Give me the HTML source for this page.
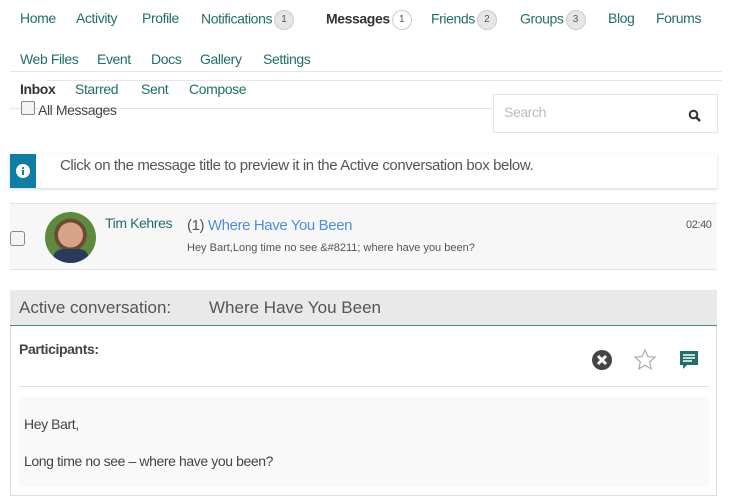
<!DOCTYPE html>
<html><head><style>
*{box-sizing:border-box;margin:0;padding:0}
body{width:734px;height:496px;overflow:hidden;background:#fff;font-family:"Liberation Sans",sans-serif;color:#555;position:relative;letter-spacing:-0.4px}
.a{position:absolute;white-space:nowrap}
.nav{font-size:14px;color:#1f6f6a}
.badge{display:inline-block;width:20px;height:20px;border-radius:50%;background:#e6e6e6;border:1px solid #ccc;font-size:10px;color:#555;text-align:center;line-height:18px;vertical-align:middle;margin-left:2px;letter-spacing:0}
.badge.w{background:#fff}
</style></head><body>
<div class="a nav" style="left:20px;top:10px">Home</div>
<div class="a nav" style="left:76px;top:10px">Activity</div>
<div class="a nav" style="left:142px;top:10px">Profile</div>
<div class="a nav" style="left:201px;top:10px">Notifications<span class="badge">1</span></div>
<div class="a nav" style="left:326px;top:10px;color:#333;font-weight:bold">Messages<span class="badge w" style="font-weight:normal">1</span></div>
<div class="a nav" style="left:431px;top:10px">Friends<span class="badge">2</span></div>
<div class="a nav" style="left:520px;top:10px">Groups<span class="badge">3</span></div>
<div class="a nav" style="left:608px;top:10px">Blog</div>
<div class="a nav" style="left:656px;top:10px">Forums</div>
<div class="a nav" style="left:20px;top:51px">Web Files</div>
<div class="a nav" style="left:97px;top:51px">Event</div>
<div class="a nav" style="left:151px;top:51px">Docs</div>
<div class="a nav" style="left:200px;top:51px">Gallery</div>
<div class="a nav" style="left:263px;top:51px">Settings</div>
<div class="a" style="left:10px;top:71px;width:712px;height:1px;background:#e6e6e6"></div>
<div class="a" style="left:46px;top:80px;width:676px;height:1px;background:#e6e6e6"></div>
<div class="a nav" style="left:20px;top:81px;color:#333;font-weight:bold">Inbox</div>
<div class="a nav" style="left:75px;top:81px">Starred</div>
<div class="a nav" style="left:141px;top:81px">Sent</div>
<div class="a nav" style="left:189px;top:81px">Compose</div>
<div class="a" style="left:10px;top:108px;width:484px;height:1px;background:#e6e6e6"></div>
<div class="a" style="left:21px;top:101px;width:14px;height:14px;border:1px solid #888;border-radius:2px;background:#f4f4f4"></div>
<div class="a" style="left:38px;top:102px;font-size:14px;color:#444">All Messages</div>
<div class="a" style="left:493px;top:94px;width:225px;height:39px;border:1px solid #e4e4e4"></div>
<div class="a" style="left:504px;top:104px;font-size:14px;color:#bbb">Search</div>
<svg class="a" style="left:688px;top:109px" width="14" height="14" viewBox="0 0 14 14"><circle cx="5.5" cy="5.5" r="3.8" fill="none" stroke="#333" stroke-width="2"/><path d="M8.5 8.5L12 12" stroke="#333" stroke-width="2.5"/></svg>
<div class="a" style="left:10px;top:154px;width:707px;height:34px;box-shadow:0 1px 3px rgba(0,0,0,.18);background:#fff"></div>
<div class="a" style="left:10px;top:154px;width:26px;height:34px;background:#0e7ea4"></div>
<svg class="a" style="left:16px;top:164px" width="14" height="14"><circle cx="7" cy="7" r="7" fill="#fff"/><rect x="6" y="6" width="2" height="5" fill="#0e7ea4"/><circle cx="7" cy="4" r="1.1" fill="#0e7ea4"/></svg>
<div class="a" style="left:60px;top:157px;font-size:15px;color:#555">Click on the message title to preview it in the Active conversation box below.</div>
<div class="a" style="left:10px;top:203px;width:707px;height:67px;background:#f7f7f7;border-top:1px solid #e3e3e3;border-bottom:1px solid #e3e3e3"></div>
<div class="a" style="left:10px;top:231px;width:15px;height:15px;border:1px solid #888;border-radius:3px;background:#f4f4f4"></div>
<div class="a" style="left:45px;top:212px;width:51px;height:51px;border-radius:50%;background:radial-gradient(circle at 50% 45%,#d9a38a 0 32%,#6a4a30 34% 42%,#5d8a3c 44%);overflow:hidden"><div style="position:absolute;bottom:0;left:8px;width:36px;height:14px;background:#2a3a5a;border-radius:10px 10px 0 0"></div></div>
<div class="a" style="left:105px;top:215px;font-size:14px;color:#1f6f6a">Tim Kehres</div>
<div class="a" style="left:187px;top:217px;font-size:15px;color:#555">(1) <span style="color:#4a90e2">Where Have You Been</span></div>
<div class="a" style="left:686px;top:219px;font-size:11px;color:#555">02:40</div>
<div class="a" style="left:187px;top:242px;font-size:11px;color:#555;letter-spacing:0">Hey Bart,Long time no see &amp;#8211; where have you been?</div>
<div class="a" style="left:10px;top:290px;width:707px;height:206px;border:1px solid #ddd;border-top:none"></div>
<div class="a" style="left:10px;top:290px;width:707px;height:36px;background:#e9e9e9;border-bottom:1.5px solid #4a8a80;border-radius:2px 2px 0 0"></div>
<div class="a" style="left:19px;top:298px;font-size:17px;color:#555;letter-spacing:0">Active conversation:</div>
<div class="a" style="left:209px;top:298px;font-size:17px;color:#555;letter-spacing:0">Where Have You Been</div>
<div class="a" style="left:19px;top:341px;font-size:14px;font-weight:bold;color:#444">Participants:</div>
<svg class="a" style="left:591px;top:349px" width="22" height="22" viewBox="0 0 22 22"><circle cx="11" cy="11" r="10" fill="#444"/><path d="M7 7L15 15M15 7L7 15" stroke="#fff" stroke-width="3"/></svg>
<svg class="a" style="left:633px;top:348px" width="24" height="24" viewBox="0 0 24 24"><path d="M12 2l2.9 6.6 7.1.6-5.4 4.7 1.6 7L12 17.2 5.8 20.9l1.6-7L2 9.2l7.1-.6z" fill="none" stroke="#aaa" stroke-width="1.2"/></svg>
<svg class="a" style="left:678px;top:350px" width="22" height="22" viewBox="0 0 22 22"><path d="M2 1h18v14H9l-4 4v-4H2z" fill="#1f6f6a"/><path d="M5 5h12M5 8h12M5 11h9" stroke="#fff" stroke-width="1.4"/></svg>
<div class="a" style="left:19px;top:386px;width:690px;height:1px;background:#e3e3e3"></div>
<div class="a" style="left:19px;top:397px;width:690px;height:90px;background:#f9f9f9;border-radius:2px"></div>
<div class="a" style="left:24px;top:416px;font-size:14px;color:#444">Hey Bart,</div>
<div class="a" style="left:24px;top:453px;font-size:14px;color:#444">Long time no see – where have you been?</div>
</body></html>
